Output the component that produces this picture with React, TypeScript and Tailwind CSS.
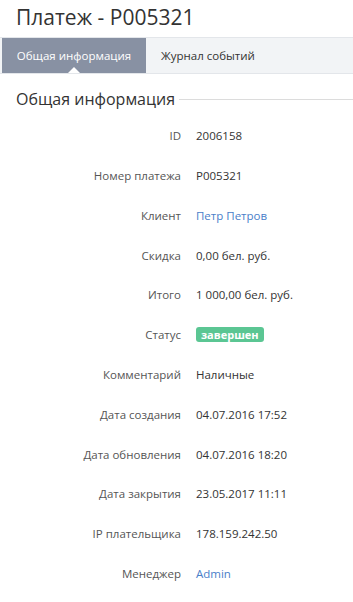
import React from "react";

const rows: { label: string; value: React.ReactNode }[] = [
  { label: "ID", value: "2006158" },
  { label: "Номер платежа", value: "P005321" },
  { label: "Клиент", value: <span className="text-[#4a80c9]">Петр Петров</span> },
  { label: "Скидка", value: "0,00 бел. руб." },
  { label: "Итого", value: "1 000,00 бел. руб." },
  {
    label: "Статус",
    value: (
      <span className="inline-block rounded-[3px] bg-[#5bc693] px-[5px] text-[11px] font-bold leading-[15px] text-white">
        завершен
      </span>
    ),
  },
  { label: "Комментарий", value: "Наличные" },
  { label: "Дата создания", value: "04.07.2016 17:52" },
  { label: "Дата обновления", value: "04.07.2016 18:20" },
  { label: "Дата закрытия", value: "23.05.2017 11:11" },
  { label: "IP плательщика", value: "178.159.242.50" },
  { label: "Менеджер", value: <span className="text-[#4a80c9]">Admin</span> },
];

export default function App() {
  return (
    <div
      className="w-[353px] h-[602px] overflow-hidden bg-white text-[#333]"
      style={{ fontFamily: '"Open Sans", sans-serif' }}
    >
      <h1 className="pl-4 text-[21px] leading-[34px] font-normal text-[#333]">
        Платеж - P005321
      </h1>
      <div className="mt-[3px] flex h-[37px] border-t border-b border-[#e3e6ea] bg-[#f2f4f6] pl-[2px]">
        <div className="relative flex w-[144px] items-center justify-center bg-[#8891a3] text-[11.5px] text-white">
          Общая информация
          <span className="absolute bottom-0 left-1/2 h-0 w-0 -translate-x-1/2 border-x-[6px] border-b-[6px] border-x-transparent border-b-white" />
        </div>
        <div className="flex items-center px-[15px] text-[11.5px] text-[#333]">
          Журнал событий
        </div>
      </div>
      <div className="mt-[13px] flex items-center pl-4">
        <span className="text-[16px] leading-[24px] text-[#333]">Общая информация</span>
        <div className="ml-[4px] h-px flex-1 bg-[#dcdcdc]" />
      </div>
      <div className="mt-[5px]">
        {rows.map((r) => (
          <div key={r.label} className="flex h-[39.8px] items-center text-[11.5px]">
            <div className="w-[181px] text-right text-[#555]">{r.label}</div>
            <div className="pl-[15px] text-[#333]">{r.value}</div>
          </div>
        ))}
      </div>
    </div>
  );
}
